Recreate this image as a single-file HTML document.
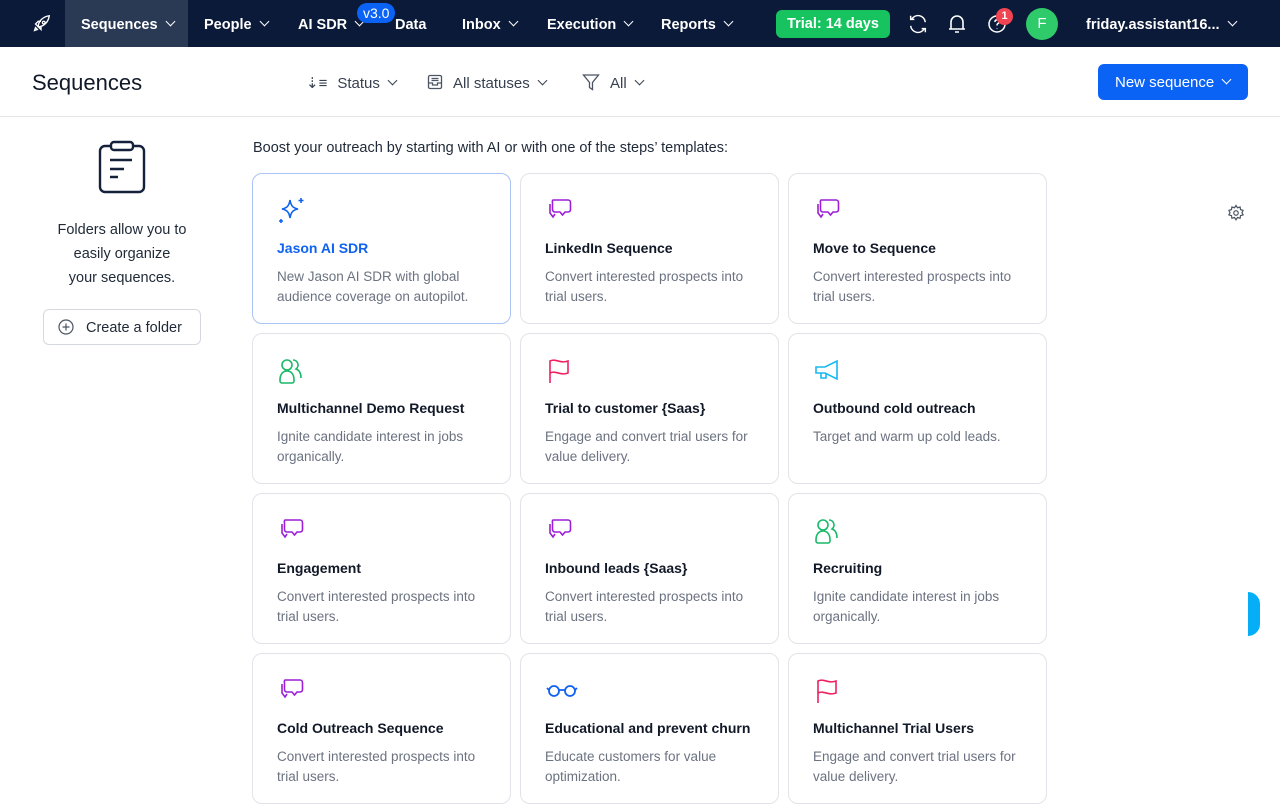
<!DOCTYPE html>
<html><head><meta charset="utf-8"><style>
*{box-sizing:border-box;margin:0;padding:0}
body{width:1280px;height:808px;overflow:hidden;font-family:"Liberation Sans",sans-serif;background:#fff;color:#111827;position:relative}
.nav{height:47px;background:#0a1a38;position:relative;color:#fff;font-size:14.5px;font-weight:bold}
.nav .it{position:absolute;top:0;height:47px;line-height:51px;white-space:nowrap}
.chev{display:inline-block;width:7px;height:7px;border-right:1.6px solid currentColor;border-bottom:1.6px solid currentColor;transform:rotate(45deg);margin-left:9px;position:relative;top:-4px}
.hdr{height:70px;border-bottom:1px solid #e5e7eb;position:relative}
.hdr .f{position:absolute;top:0;line-height:73px;font-size:15px;color:#374151;white-space:nowrap}
.card{position:absolute;width:259px;height:151px;border:1px solid #e1e3e8;border-radius:10px;padding:0 24px}
.card svg{position:absolute;left:24px;top:22px}
.card h3{position:absolute;left:24px;top:66px;font-size:14px;font-weight:bold;color:#111827}
.card p{position:absolute;left:24px;top:93px;width:212px;font-size:13.5px;line-height:20px;color:#6b7280}
</style></head><body>
<div class="nav">
<svg style="position:absolute;left:30px;top:13px" width="22" height="22" viewBox="0 0 24 24" fill="none" stroke="#fff" stroke-width="1.5"><path d="M5 19l3-1 -2-2zM9 15c0-6 5-11 12-12-1 7-6 12-12 12zM9 15l-3-3 3-3h3M9 15l3 3v-3M15 9a1.5 1.5 0 1 0 0.01 0"/></svg>
<div class="it" style="left:65px;width:123px;background:#2a3a55;padding-left:16px">Sequences<span class="chev"></span></div>
<div class="it" style="left:204px">People<span class="chev"></span></div>
<div class="it" style="left:298px">AI SDR<span class="chev"></span></div>
<div style="position:absolute;left:357px;top:3px;background:#0b63f6;border-radius:10px;padding:0 6px;height:20px;line-height:20px;font-size:14px;font-weight:normal">v3.0</div>
<div class="it" style="left:395px">Data</div>
<div class="it" style="left:462px">Inbox<span class="chev"></span></div>
<div class="it" style="left:547px">Execution<span class="chev"></span></div>
<div class="it" style="left:661px">Reports<span class="chev"></span></div>
<div style="position:absolute;left:776px;top:10px;width:114px;height:28px;background:#16c35f;border-radius:6px;text-align:center;line-height:29px">Trial: 14 days</div>
<svg style="position:absolute;left:907px;top:13px" width="22" height="22" viewBox="0 0 24 24" fill="none" stroke="#fff" stroke-width="1.6"><path d="M20 10a8 8 0 0 0-15-3M4 3v4h4M4 14a8 8 0 0 0 15 3M20 21v-4h-4"/></svg>
<svg style="position:absolute;left:947px;top:13px" width="20" height="22" viewBox="0 0 20 22" fill="none" stroke="#fff" stroke-width="1.6"><path d="M4 16V9a6 6 0 0 1 12 0v7zM2 16h16M8 19h4"/></svg>
<svg style="position:absolute;left:987px;top:14px" width="20" height="20" viewBox="0 0 20 20" fill="none" stroke="#fff" stroke-width="1.5"><circle cx="10" cy="10" r="8"/><path d="M8 8a2 2 0 1 1 3 1.5c-1 .5-1 1-1 2M10 14v.5"/></svg>
<div style="position:absolute;left:996px;top:8px;width:17px;height:17px;border-radius:50%;background:#f04452;font-size:11px;text-align:center;line-height:17px">1</div>
<div style="position:absolute;left:1026px;top:8px;width:32px;height:32px;border-radius:50%;background:#2fcb6b;text-align:center;line-height:32px;font-weight:normal;font-size:15px">F</div>
<div class="it" style="left:1086px">friday.assistant16...<span class="chev"></span></div>
</div>
<div class="hdr">
<div style="position:absolute;left:32px;top:0;line-height:72px;font-size:22px;color:#111827">Sequences</div>
<div class="f" style="left:306px"><span style="font-size:15px;margin-right:10px">⇣≡</span>Status<span class="chev"></span></div>
<div class="f" style="left:427px"><svg width="16" height="16" viewBox="0 0 16 16" fill="none" stroke="#4b5563" stroke-width="1.3" style="vertical-align:-2px;margin-right:10px"><rect x="1.5" y="1.5" width="13" height="13" rx="1.5"/><path d="M1.5 9h4v2h5V9h4M4.5 4.5h7M4.5 6.5h7"/></svg>All statuses<span class="chev"></span></div>
<div class="f" style="left:582px"><svg width="18" height="18" viewBox="0 0 18 18" fill="none" stroke="#4b5563" stroke-width="1.3" style="vertical-align:-3px;margin-right:10px"><path d="M1.5 2h15l-6 7.5v7l-3-2v-5z"/></svg>All<span class="chev"></span></div>
<div style="position:absolute;left:1098px;top:17px;width:150px;height:36px;background:#0b63f6;border-radius:6px;color:#fff;font-size:15px;line-height:38px;padding-left:17px">New sequence<span class="chev"></span></div>
</div>
<svg style="position:absolute;left:97px;top:140px" width="50" height="54" viewBox="0 0 50 54" fill="none" stroke="#15213b" stroke-width="2.4"><rect x="3" y="6" width="44" height="46" rx="5"/><rect x="14" y="2" width="22" height="8" rx="3" fill="#fff"/><path d="M13 20h22M13 29h14M13 37h8"/></svg>
<div style="position:absolute;left:32px;top:218px;width:180px;text-align:center;font-size:14.5px;line-height:24px;color:#1f2937">Folders allow you to<br>easily organize<br>your sequences.</div>
<div style="position:absolute;left:43px;top:309px;width:158px;height:36px;border:1px solid #d5d8de;border-radius:6px;font-size:14.5px;line-height:36px;color:#1f2937;padding-left:42px">Create a folder</div>
<svg style="position:absolute;left:58px;top:319px" width="16" height="16" viewBox="0 0 16 16" fill="none" stroke="#4b5563" stroke-width="1.2"><circle cx="8" cy="8" r="7"/><path d="M8 4.5v7M4.5 8h7"/></svg>
<div style="position:absolute;left:253px;top:140px;font-size:14.5px;color:#1f2937">Boost your outreach by starting with AI or with one of the steps’ templates:</div>
<svg style="position:absolute;left:1227px;top:204px" width="18" height="18" viewBox="0 0 24 24" fill="none" stroke="#4b5563" stroke-width="1.6"><circle cx="12" cy="12" r="3"/><path d="M12 2l2 3 3.5-1 .5 3.5 3.5 1-1.5 3 1.5 3-3.5 1-.5 3.5-3.5-1-2 3-2-3-3.5 1-.5-3.5-3.5-1 1.5-3-1.5-3 3.5-1 .5-3.5 3.5 1z"/></svg>
<div style="position:absolute;left:1248px;top:592px;width:12px;height:44px;background:#06aef8;border-radius:0 22px 22px 0"></div>

<div class="card" style="left:252px;top:173px;border-color:#a9c4f5"><svg width="30" height="30" viewBox="0 0 30 30" fill="none" stroke="#1062f0" stroke-width="1.6"><path d="M13 4c1 6 3 8 8 9-5 1-7 3-8 9-1-6-3-8-8-9 5-1 7-3 8-9zM24 2v5M21.5 4.5h5M4 23v4M2 25h4"/></svg><h3 style="color:#1062f0">Jason AI SDR</h3><p>New Jason AI SDR with global audience coverage on autopilot.</p></div>
<div class="card" style="left:520px;top:173px"><svg width="30" height="30" viewBox="0 0 30 30" fill="none" stroke="#9b1fd6" stroke-width="1.6"><path d="M8 4h15a2.5 2.5 0 0 1 2.5 2.5v7a2.5 2.5 0 0 1-2.5 2.5h-3l-2.5 3-2.5-3H10a2.5 2.5 0 0 1-2.5-2.5v-7A2.5 2.5 0 0 1 8 4zM5 8v9l3 4 2-3"/></svg><h3>LinkedIn Sequence</h3><p>Convert interested prospects into trial users.</p></div>
<div class="card" style="left:788px;top:173px"><svg width="30" height="30" viewBox="0 0 30 30" fill="none" stroke="#9b1fd6" stroke-width="1.6"><path d="M8 4h15a2.5 2.5 0 0 1 2.5 2.5v7a2.5 2.5 0 0 1-2.5 2.5h-3l-2.5 3-2.5-3H10a2.5 2.5 0 0 1-2.5-2.5v-7A2.5 2.5 0 0 1 8 4zM5 8v9l3 4 2-3"/></svg><h3>Move to Sequence</h3><p>Convert interested prospects into trial users.</p></div>

<div class="card" style="left:252px;top:333px"><svg width="30" height="30" viewBox="0 0 30 30" fill="none" stroke="#19b968" stroke-width="1.6"><circle cx="10" cy="9" r="5"/><path d="M3 24c0-6 3-9 7-9s7 3 7 9v1a2 2 0 0 1-2 2H5a2 2 0 0 1-2-2zM16 4a5 5 0 0 1 3 9c3 1 5 4 5 9"/></svg><h3>Multichannel Demo Request</h3><p>Ignite candidate interest in jobs organically.</p></div>
<div class="card" style="left:520px;top:333px"><svg width="30" height="30" viewBox="0 0 30 30" fill="none" stroke="#ee2160" stroke-width="1.6"><path d="M5 27V5c6-3 10 3 18 0v12c-8 3-12-3-18 0"/></svg><h3>Trial to customer {Saas}</h3><p>Engage and convert trial users for value delivery.</p></div>
<div class="card" style="left:788px;top:333px"><svg width="30" height="30" viewBox="0 0 30 30" fill="none" stroke="#18b8f2" stroke-width="1.6"><path d="M3 11h9l12-6v18l-12-6H3zM8 17v5h5v-4"/></svg><h3>Outbound cold outreach</h3><p>Target and warm up cold leads.</p></div>

<div class="card" style="left:252px;top:493px"><svg width="30" height="30" viewBox="0 0 30 30" fill="none" stroke="#9b1fd6" stroke-width="1.6"><path d="M8 4h15a2.5 2.5 0 0 1 2.5 2.5v7a2.5 2.5 0 0 1-2.5 2.5h-3l-2.5 3-2.5-3H10a2.5 2.5 0 0 1-2.5-2.5v-7A2.5 2.5 0 0 1 8 4zM5 8v9l3 4 2-3"/></svg><h3>Engagement</h3><p>Convert interested prospects into trial users.</p></div>
<div class="card" style="left:520px;top:493px"><svg width="30" height="30" viewBox="0 0 30 30" fill="none" stroke="#9b1fd6" stroke-width="1.6"><path d="M8 4h15a2.5 2.5 0 0 1 2.5 2.5v7a2.5 2.5 0 0 1-2.5 2.5h-3l-2.5 3-2.5-3H10a2.5 2.5 0 0 1-2.5-2.5v-7A2.5 2.5 0 0 1 8 4zM5 8v9l3 4 2-3"/></svg><h3>Inbound leads {Saas}</h3><p>Convert interested prospects into trial users.</p></div>
<div class="card" style="left:788px;top:493px"><svg width="30" height="30" viewBox="0 0 30 30" fill="none" stroke="#19b968" stroke-width="1.6"><circle cx="10" cy="9" r="5"/><path d="M3 24c0-6 3-9 7-9s7 3 7 9v1a2 2 0 0 1-2 2H5a2 2 0 0 1-2-2zM16 4a5 5 0 0 1 3 9c3 1 5 4 5 9"/></svg><h3>Recruiting</h3><p>Ignite candidate interest in jobs organically.</p></div>

<div class="card" style="left:252px;top:653px"><svg width="30" height="30" viewBox="0 0 30 30" fill="none" stroke="#9b1fd6" stroke-width="1.6"><path d="M8 4h15a2.5 2.5 0 0 1 2.5 2.5v7a2.5 2.5 0 0 1-2.5 2.5h-3l-2.5 3-2.5-3H10a2.5 2.5 0 0 1-2.5-2.5v-7A2.5 2.5 0 0 1 8 4zM5 8v9l3 4 2-3"/></svg><h3>Cold Outreach Sequence</h3><p>Convert interested prospects into trial users.</p></div>
<div class="card" style="left:520px;top:653px"><svg width="34" height="30" viewBox="0 0 34 30" fill="none" stroke="#1062f0" stroke-width="1.8"><circle cx="9" cy="15" r="5"/><circle cx="25" cy="15" r="5"/><path d="M14 14h6M4 14l-2-2M30 14l2-2"/></svg><h3>Educational and prevent churn</h3><p>Educate customers for value optimization.</p></div>
<div class="card" style="left:788px;top:653px"><svg width="30" height="30" viewBox="0 0 30 30" fill="none" stroke="#ee2160" stroke-width="1.6"><path d="M5 27V5c6-3 10 3 18 0v12c-8 3-12-3-18 0"/></svg><h3>Multichannel Trial Users</h3><p>Engage and convert trial users for value delivery.</p></div>
</body></html>
